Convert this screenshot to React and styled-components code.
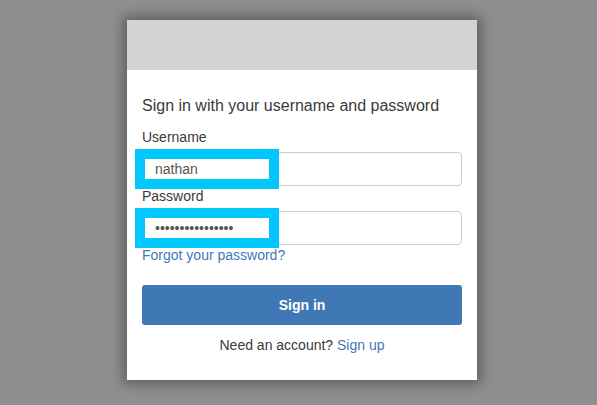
import React from "react";
import styled, { createGlobalStyle } from "styled-components";

const GlobalStyle = createGlobalStyle`
  html, body {
    margin: 0;
    padding: 0;
    background-color: #8f8f8f;
    font-family: "Liberation Sans", Arial, sans-serif;
  }
`;

const Page = styled.div`
  width: 597px;
  height: 405px;
  padding: 20px 0 0 127px;
  box-sizing: border-box;
  overflow: hidden;
`;

const Card = styled.div`
  width: 350px;
  height: 360px;
  background-color: #ffffff;
  box-shadow: 0 0 12px 4px rgba(0, 0, 0, 0.35);
  display: flex;
  flex-direction: column;
`;

const CardHeader = styled.div`
  height: 50px;
  background-color: #d3d3d3;
`;

const CardBody = styled.div`
  padding: 26px 15px 0;
  display: flex;
  flex-direction: column;
`;

const Title = styled.div`
  font-size: 16px;
  line-height: 20px;
  color: #3a3a3a;
  margin-bottom: 13px;
`;

const Label = styled.div`
  font-size: 14px;
  line-height: 16px;
  color: #3a3a3a;
  margin-bottom: 7px;
`;

const Field = styled.div`
  position: relative;
  height: 34px;
  border: 1px solid #cccccc;
  border-radius: 4px;
  box-sizing: border-box;
  margin-bottom: ${(p) => p.$gap}px;
`;

const Mask = styled.div`
  position: absolute;
  left: -8px;
  top: -4px;
  width: 114px;
  height: 20px;
  border: 10px solid #00c8fc;
  background-color: #ffffff;
  display: flex;
  align-items: center;
  padding-left: 10px;
  font-size: 14px;
  color: #555555;
`;

const Dots = styled.span`
  font-size: 14px;
  color: #555555;
`;

const Link = styled.a`
  color: #3f7ab6;
  text-decoration: none;
  font-size: 14px;
  cursor: pointer;
`;

const Forgot = styled(Link)`
  line-height: 18px;
  margin-bottom: 21px;
`;

const Button = styled.button`
  height: 40px;
  border: none;
  border-radius: 3px;
  background-color: #4077b5;
  color: #ffffff;
  font-family: "Liberation Sans", Arial, sans-serif;
  font-size: 14px;
  font-weight: 700;
  margin-bottom: 12px;
`;

const Footer = styled.div`
  text-align: center;
  font-size: 14px;
  color: #3a3a3a;
`;

export default function App() {
  return (
    <>
      <GlobalStyle />
      <Page>
        <Card>
          <CardHeader />
          <CardBody>
            <Title>Sign in with your username and password</Title>
            <Label>Username</Label>
            <Field $gap={2}>
              <Mask>nathan</Mask>
            </Field>
            <Label>Password</Label>
            <Field $gap={1}>
              <Mask>
                <Dots>••••••••••••••••</Dots>
              </Mask>
            </Field>
            <Forgot>Forgot your password?</Forgot>
            <Button>Sign in</Button>
            <Footer>
              Need an account? <Link>Sign up</Link>
            </Footer>
          </CardBody>
        </Card>
      </Page>
    </>
  );
}
